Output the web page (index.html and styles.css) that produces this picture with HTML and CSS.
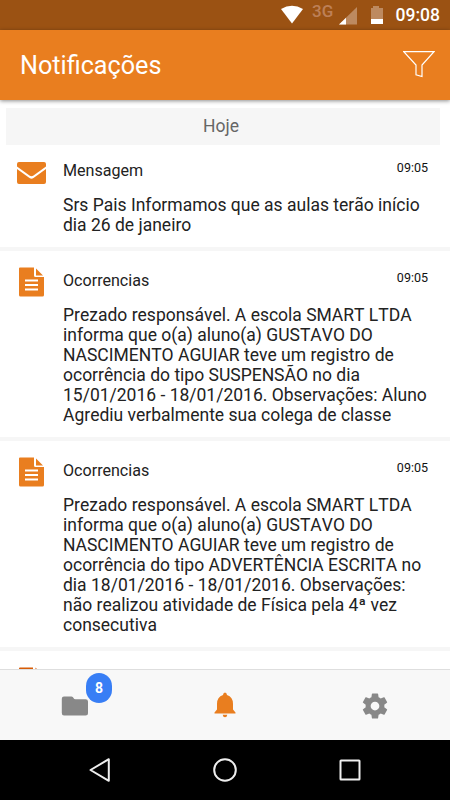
FILE: index.html
```html
<!DOCTYPE html>
<html lang="pt-BR">
<head>
<meta charset="utf-8">
<title>Notificações</title>
<link rel="stylesheet" href="styles.css">
</head>
<body>
<div class="status">
  <svg class="status-icons" width="116" height="30" viewBox="0 0 116 30">
    <path class="white" d="M1 9Q12 2.500 23 9L12 23.500Z"/>
    <path class="dim" d="M77 7V24.500H59Z"/>
    <path class="white" d="M66 17.700V24.500H59Z"/>
    <path class="dim" d="M93 6h6v2h4v16H91V8h2Z"/>
    <path class="white" d="M91 19h12v5H91Z"/>
  </svg>
  <span class="network">3G</span>
  <span class="clock">09:08</span>
</div>
<header class="header">
  <h1>Notificações</h1>
  <svg class="filter" width="32" height="28" viewBox="0 0 32 28">
    <path d="M.8 1.700H31L19 15V26.500L13 24.800V15Z"/>
  </svg>
</header>
<main class="list">
  <div class="day">Hoje</div>
  <article class="item">
    <svg class="icon" width="30" height="24" viewBox="0 0 30 24">
      <path d="M2 1H27Q29 1 29 3V5.500L16.500 14.500Q14.500 16 12.500 14.500L0 5.500V3Q0 1 2 1Z"/>
      <path d="M0 8L12.500 17Q14.500 18.500 16.500 17L29 8V21Q29 23 27 23H2Q0 23 0 21Z"/>
    </svg>
    <div class="content">
      <div class="top"><h2>Mensagem</h2><time>09:05</time></div>
      <p>Srs Pais Informamos que as aulas terão início<br>dia 26 de janeiro</p>
    </div>
  </article>
  <article class="item">
    <svg class="icon file" width="26" height="30" viewBox="0 0 26 30">
      <path fill-rule="evenodd" d="M1 .5H15V8.500Q15 10 16.500 10H25V28Q25 29.500 23.500 29.500H1.500Q0 29.500 0 28V1.500Q0 .5 1 .5ZM6 12.500V14.500H19V12.500ZM6 17V19H19V17ZM6 21.500V23.500H19V21.500Z"/>
      <path d="M17 1.500L24 8.500H17Z"/>
    </svg>
    <div class="content">
      <div class="top"><h2>Ocorrencias</h2><time>09:05</time></div>
      <p>Prezado responsável. A escola SMART LTDA<br>informa que o(a) aluno(a) GUSTAVO DO<br>NASCIMENTO AGUIAR teve um registro de<br>ocorrência do tipo SUSPENSÃO no dia<br>15/01/2016 - 18/01/2016. Observações: Aluno<br>Agrediu verbalmente sua colega de classe</p>
    </div>
  </article>
  <article class="item">
    <svg class="icon file" width="26" height="30" viewBox="0 0 26 30">
      <path fill-rule="evenodd" d="M1 .5H15V8.500Q15 10 16.500 10H25V28Q25 29.500 23.500 29.500H1.500Q0 29.500 0 28V1.500Q0 .5 1 .5ZM6 12.500V14.500H19V12.500ZM6 17V19H19V17ZM6 21.500V23.500H19V21.500Z"/>
      <path d="M17 1.500L24 8.500H17Z"/>
    </svg>
    <div class="content">
      <div class="top"><h2>Ocorrencias</h2><time>09:05</time></div>
      <p>Prezado responsável. A escola SMART LTDA<br>informa que o(a) aluno(a) GUSTAVO DO<br>NASCIMENTO AGUIAR teve um registro de<br>ocorrência do tipo ADVERTÊNCIA ESCRITA no<br>dia 18/01/2016 - 18/01/2016. Observações:<br>não realizou atividade de Física pela 4ª vez<br>consecutiva</p>
    </div>
  </article>
  <article class="item">
    <svg class="icon file peek" width="26" height="30" viewBox="0 0 26 30">
      <path d="M1 .5H14V8.500Q15 10 16.500 10H25V28Q25 29.500 23.500 29.500H1.500Q0 29.500 0 28V1.500Q0 .5 1 .5Z"/>
      <path d="M16.500 .5L24 8.500H16.500Z"/>
    </svg>
  </article>
</main>
<nav class="tabs">
  <a class="tab">
    <span class="folder">
      <svg width="28" height="20" viewBox="0 0 28 20"><path d="M3 .5H10.500Q12 .5 12.500 2Q13 3.300 14.500 3.300H24.500Q27 3.300 27 5.500V17Q27 19.500 24.500 19.500H3Q.8 19.500 .8 17V2.700Q.8 .5 3 .5Z"/></svg>
      <span class="badge">8</span>
    </span>
  </a>
  <a class="tab active">
    <svg width="22" height="26" viewBox="0 0 22 26"><path d="M11 .5Q12.800 .5 13 3Q19 4.800 19 12V17.500L21.500 20.500V21.500H.5V20.500L3 17.500V12Q3 4.800 9 3Q9.200 .5 11 .5ZM8.700 22.700H13.300Q13 25.300 11 25.300Q9 25.300 8.700 22.700Z"/></svg>
  </a>
  <a class="tab">
    <svg class="gear" width="30" height="30" viewBox="0 0 24 24"><path d="M19.430 12.980c.04-.32.07-.64.07-.98s-.03-.66-.07-.98l2.110-1.650c.19-.15.24-.42.12-.64l-2-3.460c-.12-.22-.39-.3-.61-.22l-2.490 1c-.52-.4-1.080-.73-1.690-.98l-.38-2.650C14.460 2.180 14.250 2 14 2h-4c-.25 0-.46.18-.49.42l-.38 2.650c-.61.25-1.170.59-1.690.98l-2.490-1c-.23-.09-.49 0-.61.22l-2 3.460c-.13.22-.07.49.12.64l2.110 1.650c-.04.32-.07.65-.07.98s.03.66.07.98l-2.110 1.650c-.19.15-.24.42-.12.64l2 3.460c.12.22.39.3.61.22l2.490-1c.52.4 1.080.73 1.690.98l.38 2.650c.03.24.24.42.49.42h4c.25 0 .46-.18.49-.42l.38-2.650c.61-.25 1.170-.59 1.690-.98l2.490 1c.23.09.49 0 .61-.22l2-3.460c.12-.22.07-.49-.12-.64l-2.110-1.650zM12 15.500c-1.930 0-3.500-1.570-3.500-3.500s1.570-3.500 3.500-3.500 3.500 1.570 3.500 3.500-1.570 3.500-3.500 3.500z"/></svg>
  </a>
</nav>
<footer class="system">
  <svg width="24" height="26" viewBox="0 0 24 26"><path d="M20.800 2.200V23.800L2.500 13Z"/></svg>
  <svg width="24" height="26" viewBox="0 0 24 26"><circle cx="12" cy="13" r="10.800"/></svg>
  <svg width="24" height="26" viewBox="0 0 24 26"><rect x="2.500" y="3.500" width="19" height="19" rx=".5"/></svg>
</footer>
</body>
</html>
```

FILE: styles.css
```css
* { box-sizing: border-box; }
body {
  margin: 0;
  width: 450px;
  height: 800px;
  overflow: hidden;
  display: flex;
  flex-direction: column;
  background: #fff;
  color: #222;
  font-family: Roboto, "Liberation Sans", sans-serif;
}
svg { display: block; flex: none; }
h1, h2, p { margin: 0; font-weight: 400; white-space: nowrap; }
.status {
  position: relative;
  height: 30px;
  flex: none;
  display: flex;
  align-items: center;
  justify-content: flex-end;
  background: #9b5213;
  color: #fff;
  padding-right: 10px;
}
.white { fill: #fff; }
.dim { fill: #bd8a60; }
.network {
  position: absolute;
  left: 312px;
  top: 1px;
  font-size: 17px;
  line-height: 20px;
  font-weight: 500;
  color: #bd8058;
}
.clock { font-size: 17.500px; font-weight: 500; line-height: 30px; }
.header {
  position: relative;
  z-index: 1;
  height: 70px;
  flex: none;
  display: flex;
  align-items: center;
  justify-content: space-between;
  padding: 0 15px 0 20px;
  background: #e97e1f;
  color: #fff;
  box-shadow: 0 1px 4px rgba(0, 0, 0, .45);
}
.header h1 { font-size: 25.200px; line-height: 30px; padding-top: 2px; }
.filter { fill: none; stroke: #fff; stroke-width: 1.200; margin-bottom: 2px; }
.list { flex: 1; min-height: 0; overflow: hidden; padding-top: 8px; }
.day {
  height: 37px;
  margin: 0 10px -4px 6px;
  padding-right: 4px;
  background: #f6f6f6;
  color: #666;
  font-size: 17.500px;
  line-height: 37px;
  text-align: center;
}
.item {
  display: flex;
  padding: 20px 22px 12px 17px;
  border-bottom: 4px solid #f6f6f6;
}
.icon { fill: #e97e1f; margin-right: 16px; }
.file { margin: -4px 18px 0 2px; }
.peek { fill: #d75c06; }
.content { flex: 1; }
.top { display: flex; justify-content: space-between; height: 34px; }
h2 { font-size: 16.100px; line-height: 20px; }
time { font-size: 12.500px; line-height: 14px; color: #111; }
p { font-size: 17.500px; line-height: 20px; font-kerning: none; }
.tabs {
  height: 71px;
  flex: none;
  display: flex;
  background: #f8f8f8;
  border-top: 1px solid #dedede;
}
.tab {
  flex: 1;
  display: flex;
  justify-content: center;
  align-items: center;
  padding-top: 2px;
  fill: #888;
}
.active { fill: #e97e1f; padding: 0 0 1px; }
.folder { position: relative; }
.badge {
  position: absolute;
  left: 25px;
  top: -23px;
  width: 26px;
  height: 30px;
  border-radius: 13px;
  background: #387ef5;
  color: #fff;
  font-size: 14px;
  line-height: 30px;
  font-weight: 700;
  text-align: center;
}
.system {
  height: 60px;
  flex: none;
  display: flex;
  align-items: center;
  justify-content: center;
  gap: 101px;
  background: #000;
  fill: none;
  stroke: #eee;
  stroke-width: 2;
  stroke-linejoin: round;
}
```
